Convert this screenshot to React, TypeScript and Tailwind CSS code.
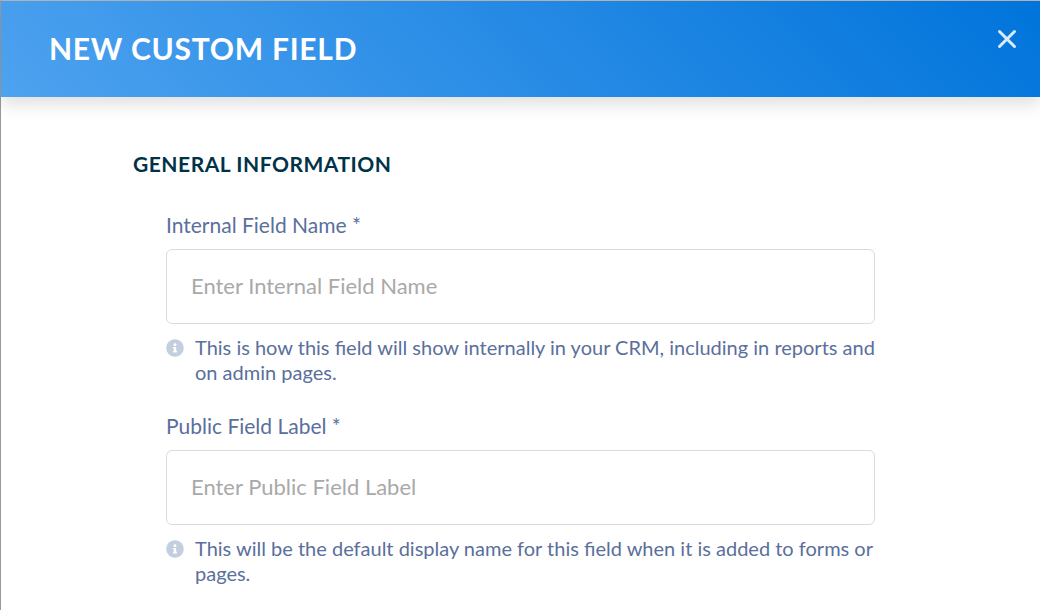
import { FaInfoCircle } from "react-icons/fa";

type FieldProps = {
  id: string;
  label: string;
  placeholder: string;
  help: string;
};

function Field({ id, label, placeholder, help }: FieldProps) {
  return (
    <div>
      <label htmlFor={id} className="block text-[21px] leading-7 text-[#5a6f9c]">
        {label} *
      </label>
      <input
        id={id}
        type="text"
        required
        placeholder={placeholder}
        aria-describedby={`${id}-help`}
        className="mt-2.5 h-[75px] w-full rounded-md border border-[#d7dbe6] px-6 pb-0.5 text-[22px] text-[#5a6f9c] outline-none placeholder:text-[#a9a9a9] focus:border-[#2f8fe8]"
      />
      <div className="mt-[11px] -mr-2 flex gap-[11px]">
        <FaInfoCircle size={18} className="mt-1 shrink-0 text-[#c3cfdf]" />
        <p id={`${id}-help`} className="text-xl leading-[25px] text-[#5a6f9c]">
          {help}
        </p>
      </div>
    </div>
  );
}

export default function App() {
  return (
    <main className="min-h-screen border-t border-l border-t-[#b5b5b5] border-l-[#999999] bg-white font-['Lato',sans-serif]">
      <header className="flex h-24 items-start justify-between bg-linear-45/srgb from-[#4ea2ef] to-[#0074db] pr-[19px] pl-12 shadow-[0_8px_16px_rgba(0,0,0,0.12)]">
        <h1 className="self-center pb-0.5 text-[30px] font-bold tracking-wide text-white uppercase">New Custom Field</h1>
        <button type="button" aria-label="Close" className="mt-6 cursor-pointer p-1 text-white/85">
          <svg width="20" height="20" viewBox="0 0 20 20" fill="none" stroke="currentColor" strokeWidth="3" strokeLinecap="round">
            <path d="M2.5 2.5l15 15M17.5 2.5l-15 15" />
          </svg>
        </button>
      </header>

      <form className="pt-[53px] pr-[165px] pb-10 pl-[132px]">
        <h2 className="text-[21px] leading-7 font-bold tracking-wide text-[#00334a] uppercase">
          General Information
        </h2>
        <div className="mt-[33px] flex flex-col gap-[27px] pl-[33px]">
          <Field
            id="internal-name"
            label="Internal Field Name"
            placeholder="Enter Internal Field Name"
            help="This is how this field will show internally in your CRM, including in reports and on admin pages."
          />
          <Field
            id="public-label"
            label="Public Field Label"
            placeholder="Enter Public Field Label"
            help="This will be the default display name for this field when it is added to forms or pages."
          />
        </div>
      </form>
    </main>
  );
}
